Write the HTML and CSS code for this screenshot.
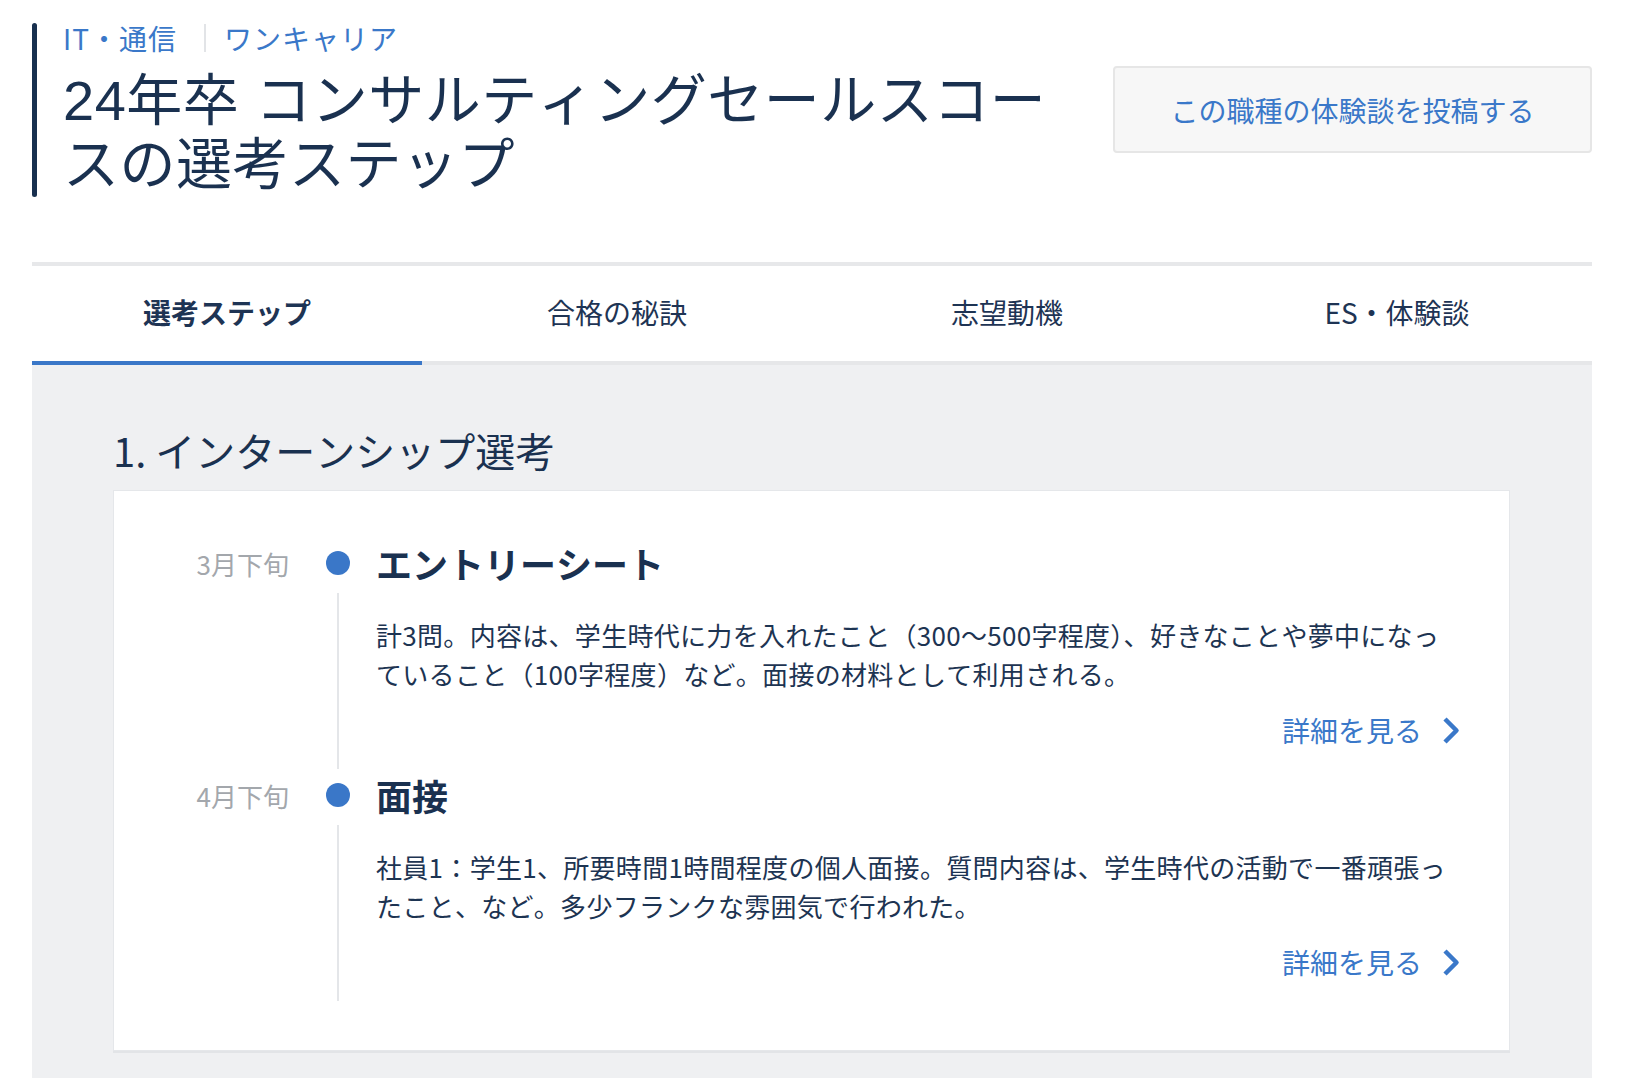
FILE: index.html
```html
<!DOCTYPE html>
<html lang="ja">
<head>
<meta charset="utf-8">
<title>24年卒 コンサルティングセールスコースの選考ステップ</title>
<link rel="stylesheet" href="styles.css">
</head>
<body>
<div class="page">
  <header class="header">
    <div class="header-bar"></div>
    <div class="header-main">
      <div class="breadcrumb">
        <a class="crumb" href="#">IT・通信</a><span class="crumb-sep"></span><a class="crumb" href="#">ワンキャリア</a>
      </div>
      <h1 class="title">24年卒 コンサルティングセールスコースの選考ステップ</h1>
    </div>
    <a class="post-button" href="#">この職種の体験談を投稿する</a>
  </header>

  <div class="divider"></div>

  <nav class="tabs">
    <a class="tab tab-active" href="#">選考ステップ</a>
    <a class="tab" href="#">合格の秘訣</a>
    <a class="tab" href="#">志望動機</a>
    <a class="tab" href="#">ES・体験談</a>
  </nav>

  <main class="content">
    <h2 class="section-title">1. インターンシップ選考</h2>
    <section class="card">
      <div class="step">
        <div class="step-head">
          <span class="step-date">3月下旬</span>
          <span class="step-dot"></span>
          <h3 class="step-title">エントリーシート</h3>
        </div>
        <div class="step-body">
          <p class="step-text">計3問。内容は、学生時代に力を入れたこと（300〜500字程度）、好きなことや夢中になっていること（100字程度）など。面接の材料として利用される。</p>
          <div class="step-link-row">
            <a class="step-link" href="#">詳細を見る<svg class="chev" width="18" height="29" viewBox="0 0 18 29"><polyline points="3,3 14.5,14.5 3,26" fill="none" stroke="#3a78c9" stroke-width="4.5" stroke-linejoin="round"/></svg></a>
          </div>
        </div>
      </div>
      <div class="step">
        <div class="step-head">
          <span class="step-date">4月下旬</span>
          <span class="step-dot"></span>
          <h3 class="step-title">面接</h3>
        </div>
        <div class="step-body">
          <p class="step-text">社員1：学生1、所要時間1時間程度の個人面接。質問内容は、学生時代の活動で一番頑張ったこと、など。多少フランクな雰囲気で行われた。</p>
          <div class="step-link-row">
            <a class="step-link" href="#">詳細を見る<svg class="chev" width="18" height="29" viewBox="0 0 18 29"><polyline points="3,3 14.5,14.5 3,26" fill="none" stroke="#3a78c9" stroke-width="4.5" stroke-linejoin="round"/></svg></a>
          </div>
        </div>
      </div>
    </section>
  </main>
</div>
</body>
</html>
```
FILE: styles.css
```css
* {
  box-sizing: border-box;
}

html, body {
  margin: 0;
  padding: 0;
  background: #ffffff;
}

body {
  font-family: "Noto Sans CJK JP", "Noto Sans", sans-serif;
  font-kerning: none;
  color: #1a3150;
}

a {
  text-decoration: none;
}

.page {
  padding: 0 34px 0 32px;
}

/* Header */
.header {
  display: flex;
  align-items: flex-start;
  padding-top: 23px;
}

.header-bar {
  width: 5px;
  align-self: stretch;
  background: #18304f;
  border-radius: 3px;
  flex: none;
}

.header-main {
  flex: 1;
  padding-left: 26px;
  padding-bottom: 0;
  margin-right: 40px;
}

.breadcrumb {
  display: flex;
  align-items: center;
  height: 30px;
  font-size: 28px;
  line-height: 30px;
  letter-spacing: 1px;
}

.crumb {
  color: #3a78c9;
}

.crumb-sep {
  display: inline-block;
  width: 2px;
  height: 28px;
  background: #e2e4e7;
  margin: 0 18px 0 27px;
}

.title {
  margin: 16px 0 0;
  font-family: "Liberation Sans", "Noto Sans CJK JP", sans-serif;
  font-size: 56px;
  line-height: 64px;
  letter-spacing: 0.5px;
  font-weight: 400;
  color: #1a3150;
}

.post-button {
  flex: none;
  width: 479px;
  height: 87px;
  margin-top: 43px;
  display: flex;
  align-items: center;
  justify-content: center;
  background: #f7f7f7;
  border: 2px solid #e6e6e6;
  border-radius: 4px;
  color: #3a78c9;
  font-size: 28px;
}

.divider {
  height: 4px;
  background: #e7e8ea;
  margin-top: 65px;
}

/* Tabs */
.tabs {
  display: grid;
  grid-template-columns: repeat(4, 1fr);
}

.tab {
  height: 99px;
  display: flex;
  align-items: center;
  justify-content: center;
  border-bottom: 4px solid #e6e7e9;
  font-size: 28px;
  color: #1e3454;
  padding-bottom: 4px;
}

.tab-active {
  font-weight: 700;
  border-bottom-color: #3a77c8;
}

/* Content */
.content {
  background: #eff0f2;
  padding: 55px 82px 40px 81px;
}

.section-title {
  margin: 0 0 10px;
  font-size: 40px;
  line-height: 60px;
  font-weight: 400;
  color: #1a3150;
}

.card {
  background: #ffffff;
  border: 1px solid #e5e7ea;
  box-shadow: 0 2px 0 #e2e4e7;
  padding: 52px 49px 49px 0;
}

.step + .step {
  margin-top: 6px;
}

.step-head {
  display: flex;
  align-items: center;
  height: 40px;
}

.step-date {
  width: 212px;
  padding-right: 37px;
  text-align: right;
  font-size: 26px;
  color: #a3a7ac;
  flex: none;
}

.step-dot {
  width: 24px;
  height: 24px;
  border-radius: 50%;
  background: #3a77c8;
  flex: none;
}

.step-title {
  margin: 0 0 0 26px;
  font-size: 36px;
  font-weight: 700;
  line-height: 40px;
  color: #1a3150;
}

.step-body {
  margin-left: 223px;
  margin-top: 10px;
  border-left: 2px solid #e4e6e9;
  padding: 22px 0 19px 37px;
}

.step-text {
  margin: 0;
  padding-right: 6px;
  font-size: 26px;
  line-height: 39px;
  letter-spacing: 0.3px;
  color: #1d3452;
}

.step-link-row {
  display: flex;
  justify-content: flex-end;
  margin-top: 17px;
  height: 40px;
  align-items: center;
}

.step-link {
  display: flex;
  align-items: center;
  color: #3a78c9;
  font-size: 28px;
  line-height: 40px;
}

.chev {
  margin-left: 20px;
  display: block;
}
```
